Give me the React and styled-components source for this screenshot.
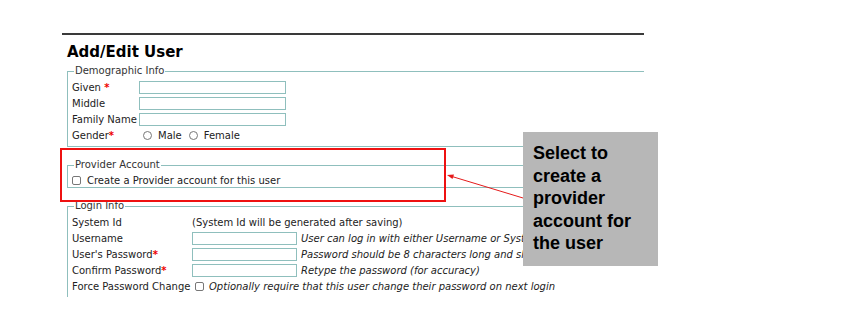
import React from 'react';
import styled, { createGlobalStyle } from 'styled-components';

const GlobalStyle = createGlobalStyle`
  body {
    margin: 0;
    background: #fff;
  }
`;

const Slide = styled.div`
  position: relative;
  width: 860px;
  height: 328px;
  padding: 32px 0 0 62px;
  box-sizing: border-box;
  overflow: hidden;
  background: #fff;
`;

const Shot = styled.div`
  width: 582px;
  height: 265px;
  overflow: hidden;
  font-family: "DejaVu Sans", Verdana, sans-serif;
  font-size: 10px;
  color: #222;
`;

const TopRule = styled.div`
  margin-top: 1px;
  height: 2px;
  background: #3a3a3a;
`;

const Title = styled.h1`
  margin: 9px 0 0 5px;
  font-size: 15px;
  line-height: 17px;
  font-weight: bold;
  color: #000;
`;

const Field = styled.fieldset`
  margin: ${p => p.$gap}px 0 0 5px;
  width: 640px;
  min-width: 0;
  border: 1px solid #8fbfbd;
  padding: 2px 4px ${p => p.$bottom}px;
`;

const Legend = styled.legend`
  margin-left: 2px;
  padding: 0 1px;
  font-size: 10px;
  line-height: 12px;
  color: #333;
`;

const Row = styled.div`
  display: flex;
  align-items: center;
  height: ${p => p.$h || 16}px;
  white-space: nowrap;
`;

const Label = styled.span`
  flex: none;
  width: ${p => p.$w}px;
`;

const Star = styled.span`
  color: #e00;
  font-weight: bold;
`;

const TextBox = styled.input`
  flex: none;
  width: ${p => p.$w}px;
  height: 13px;
  box-sizing: border-box;
  margin: 0;
  padding: 0;
  border: 1px solid #8fbfbd;
  background: #fff;
`;

const Radio = styled.input.attrs({ type: 'radio' })`
  appearance: none;
  flex: none;
  width: 9px;
  height: 9px;
  margin: 0 6px 0 ${p => p.$left || 0}px;
  border: 1px solid #777;
  border-radius: 50%;
  background: #fff;
`;

const Check = styled.input.attrs({ type: 'checkbox' })`
  appearance: none;
  flex: none;
  width: 9px;
  height: 9px;
  margin: 0 ${p => p.$right || 6}px 0 ${p => p.$left || 0}px;
  border: 1px solid #777;
  border-radius: 2px;
  background: #fff;
`;

const Option = styled.span`
  margin-right: 7px;
`;

const Hint = styled.span`
  font-style: italic;
  margin-left: 4px;
`;

const Note = styled.span`
  font-style: italic;
`;

const Highlight = styled.div`
  position: absolute;
  left: 60px;
  top: 148px;
  width: 386px;
  height: 54px;
  box-sizing: border-box;
  border: 2px solid #ee1111;
`;

const Arrow = styled.svg`
  position: absolute;
  left: 0;
  top: 0;
  pointer-events: none;
`;

const Callout = styled.div`
  position: absolute;
  left: 523px;
  top: 132px;
  width: 135px;
  height: 134px;
  box-sizing: border-box;
  padding: 10px 0 0 10px;
  background: #b7b7b7;
  font-family: "Liberation Sans", Arial, sans-serif;
  font-weight: bold;
  font-size: 18px;
  line-height: 22.5px;
  color: #000;
`;

export default function App() {
  return (
    <>
      <GlobalStyle />
      <Slide>
        <Shot>
          <TopRule />
          <Title>Add/Edit User</Title>

          <Field $gap={4} $bottom={3}>
            <Legend>Demographic Info</Legend>
            <Row>
              <Label $w={67}>Given <Star>*</Star></Label>
              <TextBox $w={147} />
            </Row>
            <Row>
              <Label $w={67}>Middle</Label>
              <TextBox $w={147} />
            </Row>
            <Row>
              <Label $w={67}>Family Name</Label>
              <TextBox $w={147} />
            </Row>
            <Row>
              <Label $w={67}>Gender<Star>*</Star></Label>
              <Radio $left={4} name="gender" />
              <Option>Male</Option>
              <Radio name="gender" />
              <Option>Female</Option>
            </Row>
          </Field>

          <Field $gap={12} $bottom={0}>
            <Legend>Provider Account</Legend>
            <Row $h={14}>
              <Check />
              <span>Create a Provider account for this user</span>
            </Row>
          </Field>

          <Field $gap={12} $bottom={30}>
            <Legend>Login Info</Legend>
            <Row>
              <Label $w={120}>System Id</Label>
              <span>(System Id will be generated after saving)</span>
            </Row>
            <Row>
              <Label $w={120}>Username</Label>
              <TextBox $w={105} />
              <Hint>User can log in with either Username or System Id</Hint>
            </Row>
            <Row>
              <Label $w={120}>User's Password<Star>*</Star></Label>
              <TextBox $w={105} />
              <Hint>Password should be 8 characters long and should contain a number</Hint>
            </Row>
            <Row>
              <Label $w={120}>Confirm Password<Star>*</Star></Label>
              <TextBox $w={105} />
              <Hint>Retype the password (for accuracy)</Hint>
            </Row>
            <Row>
              <Label $w={120}>Force Password Change</Label>
              <Check $left={3} $right={5} />
              <Note>Optionally require that this user change their password on next login</Note>
            </Row>
          </Field>
        </Shot>

        <Highlight />
        <Arrow width="860" height="328" viewBox="0 0 860 328">
          <line x1="523" y1="198" x2="452" y2="176.5" stroke="#e51b1b" strokeWidth="1" />
          <polygon points="447,175 454,174.5 452.5,179" fill="#e51b1b" />
        </Arrow>
        <Callout>
          Select to<br />
          create a<br />
          provider<br />
          account for<br />
          the user
        </Callout>
      </Slide>
    </>
  );
}
